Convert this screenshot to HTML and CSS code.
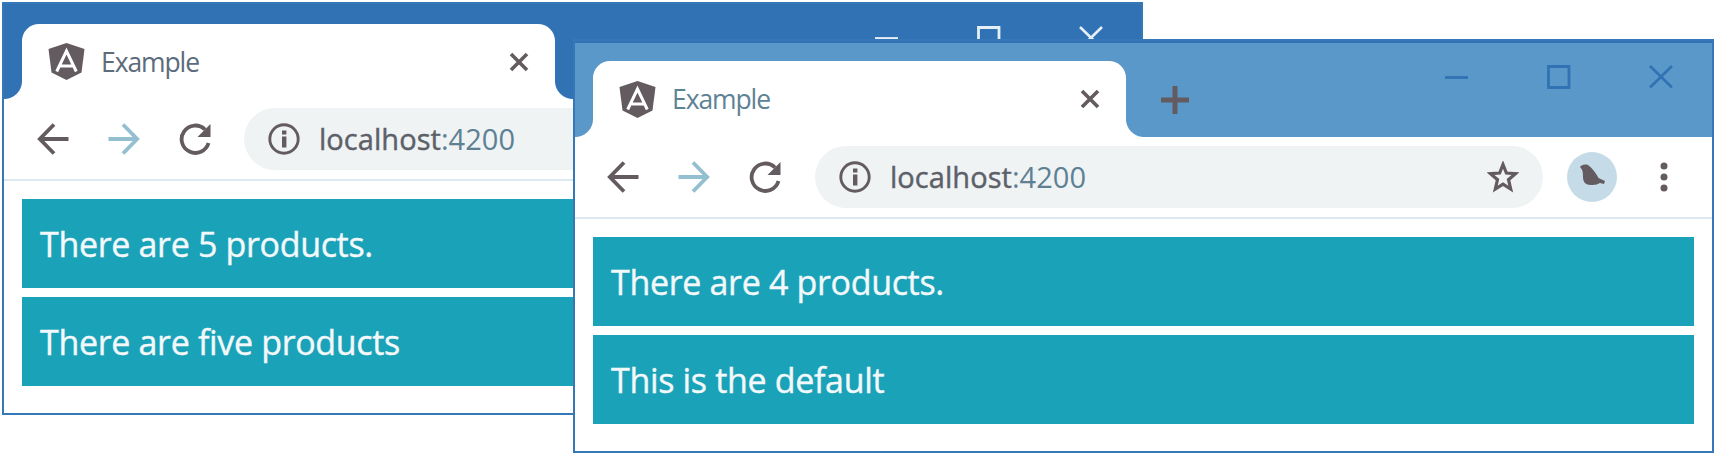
FILE: index.html
```html
<!DOCTYPE html>
<html lang="en">
<head>
<meta charset="utf-8">
<title>Example</title>
<link rel="stylesheet" href="styles.css">
</head>
<body>
<svg class="defs" width="0" height="0">
  <symbol id="shield" viewBox="0 0 37 37"><path fill="#635b5f" d="M18.500 0 36.500 6 33.500 29.500 18.500 37 3.500 29.500 .5 6z"/><path fill="none" stroke="#fff" stroke-width="3" d="M8.700 28.500 18.500 8 28.300 28.500M12.500 23h12"/></symbol>
  <symbol id="close" viewBox="0 0 20 20"><path fill="none" stroke="#635b5f" stroke-width="3.600" d="M2 2 18 18M18 2 2 18"/></symbol>
  <symbol id="arrow" viewBox="0 0 32 32"><path fill="none" stroke="currentColor" stroke-width="3.800" d="M17 1.500 2.800 16 17 30.500M3 16h28.500"/></symbol>
  <symbol id="reload" viewBox="0 0 32 32"><path fill="none" stroke="#635b5f" stroke-width="3.800" d="M26 6.500A13.700 13.700 0 1 0 29.500 20"/><path fill="#635b5f" d="M31.500 1v13H18.500z"/></symbol>
  <symbol id="info" viewBox="0 0 32 32"><circle cx="16" cy="16" r="14.200" fill="none" stroke="#635b5f" stroke-width="2.900"/><path fill="#635b5f" d="M14 13.500h4.400v11H14zM14 7.500h4.400v4H14z"/></symbol>
  <symbol id="star" viewBox="0 0 32 32"><path fill="none" stroke="#635b5f" stroke-width="3.200" d="M16 3.500 19.400 12l9.100.7-7 6 2.200 9.300L16 23.200 8.300 28l2.200-9.300-7-6 9.100-.7z"/></symbol>
  <symbol id="bird" viewBox="0 0 50 50"><circle cx="25" cy="25" r="25" fill="#c5dbe7"/><path fill="#635b5f" d="M13 15c1-2 5-3 8-2 4 3 8 8 10.500 13l6.500 3-1 3-4-1c-2 1-4 2-9 2-5.500 0-8-3-8-8 0-4 0-7-3-10z"/></symbol>
  <symbol id="dots" viewBox="0 0 8 30"><g fill="#635b5f"><circle cx="4" cy="4" r="3.500"/><circle cx="4" cy="15" r="3.500"/><circle cx="4" cy="26" r="3.500"/></g></symbol>
  <symbol id="plus" viewBox="0 0 28 28"><path fill="none" stroke="#635b5f" stroke-width="5" d="M14 0v28M0 14h28"/></symbol>
  <symbol id="min" viewBox="0 0 24 24"><path fill="none" stroke="currentColor" stroke-width="2.800" d="M0 12.500h23"/></symbol>
  <symbol id="max" viewBox="0 0 24 24"><path fill="none" stroke="currentColor" stroke-width="2.800" d="M1.500 1.500h20.500v21H1.500z"/></symbol>
  <symbol id="quit" viewBox="0 0 24 24"><path fill="none" stroke="currentColor" stroke-width="2.600" d="M1 1 23 22.500M23 1 1 22.500"/></symbol>
</svg>

<main class="desktop">
  <section class="window window-back">
    <header class="titlebar">
      <div class="tab">
        <svg class="shield"><use href="#shield"/></svg>
        <span class="tab-title">Example</span>
        <svg class="close"><use href="#close"/></svg>
      </div>
      <div class="controls">
        <svg><use href="#min"/></svg>
        <svg><use href="#max"/></svg>
        <svg><use href="#quit"/></svg>
      </div>
    </header>
    <nav class="toolbar">
      <svg class="icon"><use href="#arrow"/></svg>
      <svg class="icon forward"><use href="#arrow"/></svg>
      <svg class="icon"><use href="#reload"/></svg>
      <div class="address">
        <svg class="icon"><use href="#info"/></svg>
        <span class="url"><span class="host">localhost</span><span class="port">:4200</span></span>
      </div>
    </nav>
    <div class="page">
      <div class="card">There are 5 products.</div>
      <div class="card">There are five products</div>
    </div>
  </section>

  <section class="window window-front">
    <header class="titlebar">
      <div class="tab">
        <svg class="shield"><use href="#shield"/></svg>
        <span class="tab-title">Example</span>
        <svg class="close"><use href="#close"/></svg>
      </div>
      <svg class="plus"><use href="#plus"/></svg>
      <div class="controls">
        <svg><use href="#min"/></svg>
        <svg><use href="#max"/></svg>
        <svg><use href="#quit"/></svg>
      </div>
    </header>
    <nav class="toolbar">
      <svg class="icon"><use href="#arrow"/></svg>
      <svg class="icon forward"><use href="#arrow"/></svg>
      <svg class="icon"><use href="#reload"/></svg>
      <div class="address">
        <svg class="icon"><use href="#info"/></svg>
        <span class="url"><span class="host">localhost</span><span class="port">:4200</span></span>
        <svg class="icon star"><use href="#star"/></svg>
      </div>
      <svg class="avatar"><use href="#bird"/></svg>
      <svg class="dots"><use href="#dots"/></svg>
    </nav>
    <div class="page">
      <div class="card">There are 4 products.</div>
      <div class="card">This is the default</div>
    </div>
  </section>
</main>
</body>
</html>
```
FILE: styles.css
```css
* { box-sizing: border-box; }
body { margin: 0; background: #fff; font-family: "Open Sans", "Noto Sans", sans-serif; }
svg { display: block; flex: none; }
.defs { position: absolute; }
.desktop { position: relative; width: 1716px; height: 454px; overflow: hidden; }

.window {
  position: absolute;
  width: 1141px;
  height: 413px;
  border: 2px solid #3577b7;
  background: #fff;
}
.window-back { left: 2px; top: 2px; --bar: #3072b4; --control: #e6eff5; }
.window-front { left: 573px; top: 39px; height: 414px; --bar: #5a98ca; --control: #3072b4; }

.titlebar { display: flex; height: 95px; padding: 20px 38px 0 18px; background: var(--bar); }
.window-front .titlebar { height: 96px; padding: 18px 39px 0 18px; border-top: 2px solid #3072b4; }

.tab {
  position: relative;
  display: flex;
  align-items: center;
  width: 533px;
  height: 100%;
  padding: 0 26px;
  border-radius: 17px 17px 0 0;
  background: #fff;
}
.tab::before, .tab::after {
  content: "";
  position: absolute;
  bottom: 0;
  width: 18px;
  height: 18px;
}
.tab::before { left: -18px; background: radial-gradient(circle at 0 0, var(--bar) 17.500px, #fff 18.500px); }
.tab::after { right: -18px; background: radial-gradient(circle at 100% 0, var(--bar) 17.500px, #fff 18.500px); }
.shield { width: 37px; height: 37px; }
.tab-title { flex: 1; margin-left: 16px; font-size: 26.5px; line-height: 36px; letter-spacing: -1.1px; color: #5c6c7a; }
.window-front .tab-title { color: #5e8395; }
.close { width: 20px; height: 20px; }
.plus { width: 28px; height: 28px; margin: 25px 0 0 35px; }

.controls { display: flex; gap: 78px; margin-left: auto; color: var(--control); }
.controls svg { width: 24px; height: 24px; margin-top: 2px; }
.window-front .controls svg { margin-top: 4px; }

.toolbar { display: flex; align-items: center; height: 82px; padding-left: 33px; border-bottom: 2px solid #dce8ef; color: #635b5f; }
.window-front .toolbar { padding-left: 32px; }
.icon { width: 32px; height: 32px; }
.toolbar > .icon + .icon { margin-left: 39px; }
.forward { color: #93bfd0; transform: scaleX(-1); }
.address { display: flex; align-items: center; width: 728px; height: 62px; margin-left: 33px; padding: 0 24px; border-radius: 31px; background: #eff3f4; }
.window-front .address { margin-left: 34px; }
.url { margin-left: 19px; font-size: 29px; line-height: 40px; letter-spacing: 0.05px; white-space: nowrap; }
.host { color: #5c6068; -webkit-text-stroke: 0.4px #5c6068; }
.port { color: #5d8093; }
.star { margin-left: auto; }
.avatar { width: 50px; height: 50px; margin-left: 24px; }
.dots { width: 8px; height: 30px; margin-left: 43px; }

.page { display: grid; gap: 9px; padding: 18px 18px 0; }
.card { height: 89px; padding: 0 18px; background: #1aa2b8; color: #f3f8fa; font-size: 34px; line-height: 91px; letter-spacing: -0.33px; -webkit-text-stroke: 0.4px #f3f8fa; }
```
